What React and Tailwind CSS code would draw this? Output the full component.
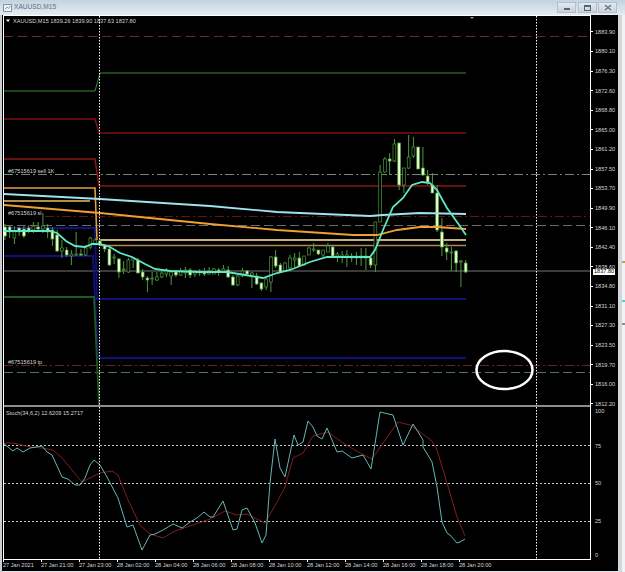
const FONT = { fontFamily: '"Liberation Sans", Arial, sans-serif' };

const PRICES = [
  "1883.90", "1880.10", "1876.30", "1872.60", "1868.80", "1865.00", "1861.20",
  "1857.50", "1853.70", "1849.90", "1846.10", "1842.40", "1838.60", "1834.80",
  "1831.10", "1827.30", "1823.50", "1819.70", "1816.00", "1812.20",
];

const TIMES = [
  "27 Jan 2021", "27 Jan 21:00", "27 Jan 23:00", "28 Jan 02:00", "28 Jan 04:00",
  "28 Jan 06:00", "28 Jan 08:00", "28 Jan 10:00", "28 Jan 12:00", "28 Jan 14:00",
  "28 Jan 16:00", "28 Jan 18:00", "28 Jan 20:00",
];

const LEVELS = [
  { label: "100", h: "h-[35px]" },
  { label: "75", h: "h-[37px]" },
  { label: "50", h: "h-[38px]" },
  { label: "25", h: "h-[34px]" },
  { label: "0", h: "h-[8px]" },
];

// high, low, body top, body bottom (page y), kind: 0 up, 1 down, 2 doji
const BARS = [
  [224,240,227,236,1],[225,238,227,232,1],[226,244,231,238,0],[227,236,228,232,1],[226,238,229,236,1],
  [225,233,228,231,1],[222,233,226,230,0],[222,231,227,229,1],[213,233,226,229,0],[224,238,228,232,1],
  [227,246,230,239,1],[230,252,235,251,1],[240,258,248,251,0],[247,257,250,255,1],[250,265,254,256,0],
  [232,256,254,255,0],[249,256,254,255,1],[245,256,248,255,0],[237,249,238,247,0],[238,245,240,244,0],
  [239,246,241,245,2],[244,252,245,249,1],[247,266,249,265,1],[254,264,257,258,0],[258,278,259,272,1],
  [261,274,269,270,0],[258,273,260,272,0],[257,268,258,260,0],[258,273,260,273,1],[269,280,272,277,1],
  [276,292,278,280,1],[272,285,278,279,0],[272,281,277,280,0],[270,278,273,277,0],[268,277,270,274,0],
  [270,285,272,276,0],[270,277,272,275,1],[268,276,271,275,0],[267,278,270,273,0],[268,278,270,275,1],
  [270,277,272,274,0],[269,276,271,273,1],[268,276,272,274,1],[267,275,271,274,0],[268,274,269,274,0],
  [268,276,270,272,1],[265,272,269,271,0],[266,278,270,277,1],[275,286,277,285,1],[275,286,276,285,0],
  [268,277,271,276,0],[270,275,271,274,1],[272,288,273,275,0],[273,285,276,284,1],[282,291,283,289,1],
  [277,290,279,287,0],[256,292,257,282,0],[250,268,257,266,1],[263,272,265,272,1],[262,272,263,271,0],
  [255,269,258,268,0],[253,267,258,260,0],[252,266,258,266,1],[256,266,256,265,0],[247,255,248,255,0],
  [243,252,249,250,0],[250,255,250,254,1],[250,257,250,255,0],[243,252,246,252,0],[246,256,247,256,1],
  [252,262,254,256,0],[251,263,255,257,0],[250,267,255,257,0],[253,262,256,258,0],[252,265,256,258,0],
  [248,266,256,258,0],[248,270,256,258,0],[256,268,258,265,1],[222,272,222,265,0],[165,222,172,222,0],
  [157,173,159,172,0],[153,175,159,161,1],[139,162,144,161,0],[143,190,143,185,1],[168,193,168,185,0],
  [135,169,157,168,0],[137,158,147,156,0],[147,169,147,169,1],[147,176,168,175,1],[170,185,176,182,1],
  [173,193,185,193,1],[185,232,193,230,1],[218,256,232,247,1],[243,260,248,252,1],[247,271,252,253,0],
  [250,272,251,263,1],[260,287,261,262,0],[260,273,263,272,1],
];

const MA_FAST = [
  [4,231],[50,231],[57,233],[66,241],[75,246],[85,247],[92,244],[100,244],[110,247],[120,253],[132,257],
  [145,264],[155,269],[170,271],[200,272],[227,272],[245,275],[263,278],[277,273],[290,270],[310,262],
  [327,257],[370,257],[375,250],[383,230],[393,207],[403,198],[412,185],[422,182],[430,183],[437,190],
  [447,208],[457,222],[466,235],
];
const MA_SLOW = [[4,194],[100,199],[210,206],[277,212],[370,216],[383,215],[420,213],[466,214]];
const MA_GOLD = [[4,205],[100,213],[210,224],[277,230],[353,235],[377,235],[397,230],[420,227],[437,227],[466,229]];

const STOCH_MAIN = [
  [3,443],[13,451],[17,448],[23,452],[30,448],[42,446],[47,452],[52,455],[62,477],[68,479],[75,485],
  [80,485],[85,478],[90,465],[94,460],[100,465],[107,477],[118,498],[127,527],[133,525],[142,550],
  [150,535],[155,534],[163,530],[173,524],[182,528],[190,522],[197,518],[204,512],[210,517],[213,517],
  [223,501],[233,530],[237,529],[242,510],[247,508],[255,523],[262,543],[266,535],[270,483],[275,439],
  [280,468],[285,477],[294,435],[298,445],[303,442],[308,421],[313,427],[317,436],[322,439],[327,428],
  [337,452],[342,451],[352,458],[363,455],[371,469],[380,412],[393,415],[403,445],[413,424],[420,435],
  [423,440],[423,447],[432,462],[437,487],[442,522],[447,533],[450,535],[457,543],[460,542],[465,539],
];
const STOCH_SIGNAL = [
  [3,443],[13,443],[30,447],[42,448],[53,450],[62,458],[82,482],[90,478],[100,473],[112,471],[118,475],
  [128,500],[140,525],[150,534],[163,538],[175,531],[190,526],[210,519],[225,511],[237,515],[247,514],
  [265,523],[277,502],[285,487],[293,458],[303,453],[313,436],[328,432],[343,443],[360,453],[372,459],
  [383,443],[398,422],[410,425],[420,432],[432,441],[437,450],[447,483],[457,517],[465,536],
];

function toPoints(points) {
  return points.map(([x, y]) => `${x},${y}`).join(" ");
}

function Candle({ bar, index }) {
  const [high, low, top, bottom, kind] = bar;
  const x = 4.9 + index * 4.75;
  const fill = kind === 1 ? "#e6ffc8" : kind === 2 ? "#e8e84a" : "#000";
  return (
    <g>
      <line x1={x} x2={x} y1={high} y2={low} stroke="#4f9a3f" />
      <rect x={x - 1.4} y={top} width={2.8} height={bottom - top} fill={fill} stroke="#4f9a3f" strokeWidth={0.7} />
    </g>
  );
}

function ChartLabel({ x, y, children }) {
  return (
    <text x={x} y={y} fill="#d4d4d4" fontSize="5.6" fontFamily="Liberation Sans, Arial, sans-serif">
      {children}
    </text>
  );
}

function MainChart() {
  return (
    <svg width="586" height="389" viewBox="4 16 586 389" className="block">
      <polygon points="470,17 474,17 472,19" fill="#999" />

      <line x1="4" x2="590" y1="36.5" y2="36.5" stroke="#6a2a2a" strokeDasharray="9 5" />
      <line x1="4" x2="590" y1="174.5" y2="174.5" stroke="#6d8d6d" strokeDasharray="9 3 2 3" />
      <line x1="45" x2="590" y1="216.5" y2="216.5" stroke="#5a1a1a" strokeWidth="1.2" strokeDasharray="9 3 2 3" />
      <line x1="4" x2="590" y1="225.5" y2="225.5" stroke="#6a6a6a" strokeDasharray="9 4" />
      <line x1="4" x2="590" y1="365.5" y2="365.5" stroke="#6e2020" strokeDasharray="9 3 2 3" />
      <line x1="4" x2="590" y1="372.5" y2="372.5" stroke="#4c7c4c" strokeDasharray="9 4" />
      <line x1="4" x2="590" y1="271" y2="271" stroke="#777" />

      <polyline points="4,91 95,91 100,73 466,73" fill="none" stroke="#3a8a3a" />
      <polyline points="4,119 95,119 99,133 466,133" fill="none" stroke="#7a1010" strokeWidth="1.6" />
      <polyline points="4,159 95,159 99,186 466,186" fill="none" stroke="#8a1414" strokeWidth="1.6" />
      <polyline points="4,228 95,228 97,299 466,299" fill="none" stroke="#10107e" strokeWidth="1.8" />
      <polyline points="4,256 93,256 98,358 466,358" fill="none" stroke="#10107e" strokeWidth="1.8" />
      <polyline points="4,297 94,297 99,405" fill="none" stroke="#1e5a1e" strokeWidth="1.8" />
      <polyline points="4,188 95,188 97,240" fill="none" stroke="#e0a040" strokeWidth="1.6" />
      <polyline points="4,201 90,201" fill="none" stroke="#e8c060" strokeWidth="1.4" />
      <polyline points="100,240 466,240" fill="none" stroke="#c4b070" strokeWidth="1.8" />
      <polyline points="100,245.5 466,245.5" fill="none" stroke="#b08850" strokeWidth="1.6" />

      {BARS.map((bar, i) => (
        <Candle key={i} bar={bar} index={i} />
      ))}

      <polyline points={toPoints(MA_SLOW)} fill="none" stroke="#9fe3ee" strokeWidth="1.8" />
      <polyline points={toPoints(MA_GOLD)} fill="none" stroke="#f0a030" strokeWidth="1.8" />
      <polyline points={toPoints(MA_FAST)} fill="none" stroke="#5fe8c8" strokeWidth="1.8" />

      <line x1="99.5" x2="99.5" y1="16" y2="405" stroke="#fff" strokeDasharray="1.5 1.5" />
      <line x1="536.5" x2="536.5" y1="16" y2="405" stroke="#fff" strokeDasharray="1.5 1.5" />

      <ellipse cx="504.5" cy="370" rx="28" ry="19" fill="none" stroke="#fff" strokeWidth="2.5" />

      <polygon points="6,19.5 10,19.5 8,22" fill="#fff" />
      <ChartLabel x="13" y="23">XAUUSD,M15  1839.26 1839.90 1837.63 1837.80</ChartLabel>
      <ChartLabel x="8" y="173">#67515619 sell 1K</ChartLabel>
      <ChartLabel x="8" y="215">#67515619 sl</ChartLabel>
      <ChartLabel x="8" y="364">#67515619 tp</ChartLabel>
    </svg>
  );
}

function StochChart() {
  return (
    <svg width="586" height="152" viewBox="4 407 586 152" className="block">
      {[445.5, 483.5, 521.5].map((y) => (
        <line key={y} x1="4" x2="590" y1={y} y2={y} stroke="#c8c8c8" strokeDasharray="2 2" />
      ))}
      <polyline points={toPoints(STOCH_SIGNAL)} fill="none" stroke="#7e1e1e" />
      <polyline points={toPoints(STOCH_MAIN)} fill="none" stroke="#66b5b5" />
      <line x1="99.5" x2="99.5" y1="407" y2="559" stroke="#fff" strokeDasharray="1.5 1.5" />
      <line x1="536.5" x2="536.5" y1="407" y2="559" stroke="#fff" strokeDasharray="1.5 1.5" />
      <ChartLabel x="6" y="415">Stoch(34,6,2) 12.6209 15.2717</ChartLabel>
    </svg>
  );
}

function WindowButton({ children }) {
  return (
    <div className="flex h-[11px] w-[19px] items-center justify-center border border-[#b3c0cc] bg-gradient-to-b from-[#e2e9ef] to-[#c6d2dc]">
      {children}
    </div>
  );
}

function TitleBar() {
  return (
    <div className="flex h-[15px] items-center bg-gradient-to-b from-[#c4d3e0] to-[#e4ebf1] pl-[3px] pr-[8px]" style={FONT}>
      <svg width="9" height="9" viewBox="0 0 9 9" className="mr-[2px]">
        <rect x="0.5" y="1.5" width="8" height="7" fill="#eef3f7" stroke="#7d96ad" />
        <path d="M2 6.5 L4 4 L5.5 5.5 L7.5 3" fill="none" stroke="#5d89b0" strokeWidth="0.8" />
      </svg>
      <span className="text-[6.6px] leading-none text-[#5f7186]">XAUUSD,M15</span>
      <div className="ml-auto flex gap-[1.5px]">
        <WindowButton>
          <div className="mt-[3px] h-[2px] w-[6px] border border-[#566573]" />
        </WindowButton>
        <WindowButton>
          <div className="h-[6px] w-[7px] border border-t-2 border-[#566573]" />
        </WindowButton>
        <WindowButton>
          <svg width="8" height="7" viewBox="0 0 8 7">
            <path d="M1 1 L7 6 M7 1 L1 6" stroke="#66747f" strokeWidth="1.4" />
          </svg>
        </WindowButton>
      </div>
    </div>
  );
}

function PriceAxis() {
  return (
    <div className="relative h-[391px] pt-[6.2px]">
      {PRICES.map((price) => (
        <div key={price} className="flex h-[19.58px] shrink-0 items-center text-[5.6px] text-[#d4d4d4]">
          <div className="mr-[2px] h-px w-[2px] bg-white" />
          {price}
        </div>
      ))}
      <div className="absolute left-[2px] top-[252.5px] flex h-[6px] w-[22px] items-center bg-white pl-px text-[5.6px] text-black">
        1837.80
      </div>
    </div>
  );
}

function StochAxis() {
  return (
    <div>
      {LEVELS.map(({ label, h }) => (
        <div key={label} className={`flex items-start pl-[4px] text-[5.6px] leading-[8px] text-[#d4d4d4] ${h}`}>
          {label}
        </div>
      ))}
    </div>
  );
}

function TimeAxis() {
  return (
    <div className="flex h-[11px] text-[5.6px] text-[#d4d4d4]">
      {TIMES.map((time) => (
        <div key={time} className="w-[38px] shrink-0">
          <div className="h-[2px] w-px bg-white" />
          <div className="leading-[7px]">{time}</div>
        </div>
      ))}
    </div>
  );
}

function App() {
  return (
    <div className="flex h-[572px] w-[625px] flex-col overflow-hidden bg-[#dde4ea]" style={FONT}>
      <TitleBar />
      <div className="flex flex-1">
        <div className="w-[2px] bg-[#c9ced3]" />
        <div className="flex h-[556px] w-[616px] bg-black pl-px">
          <div className="w-[588px]">
            <div className="border-x border-y border-white">
              <MainChart />
              <div className="h-[2px] bg-[#8c8c8c]" />
              <StochChart />
            </div>
            <TimeAxis />
          </div>
          <div className="w-[27px] pt-px">
            <PriceAxis />
            <StochAxis />
          </div>
        </div>
        <div className="flex w-[7px]">
          <div className="w-[4px] bg-[#d3d7da]" />
          <div className="flex w-[3px] flex-col bg-[#f0f2f4] pt-[246px]">
            <div className="h-[2px] bg-[#d09a40]" />
            <div className="mt-[37px] h-[2px] bg-[#5fc8d0]" />
            <div className="mt-[21px] h-[2px] bg-[#8a8f94]" />
          </div>
        </div>
      </div>
    </div>
  );
}

export default App;
